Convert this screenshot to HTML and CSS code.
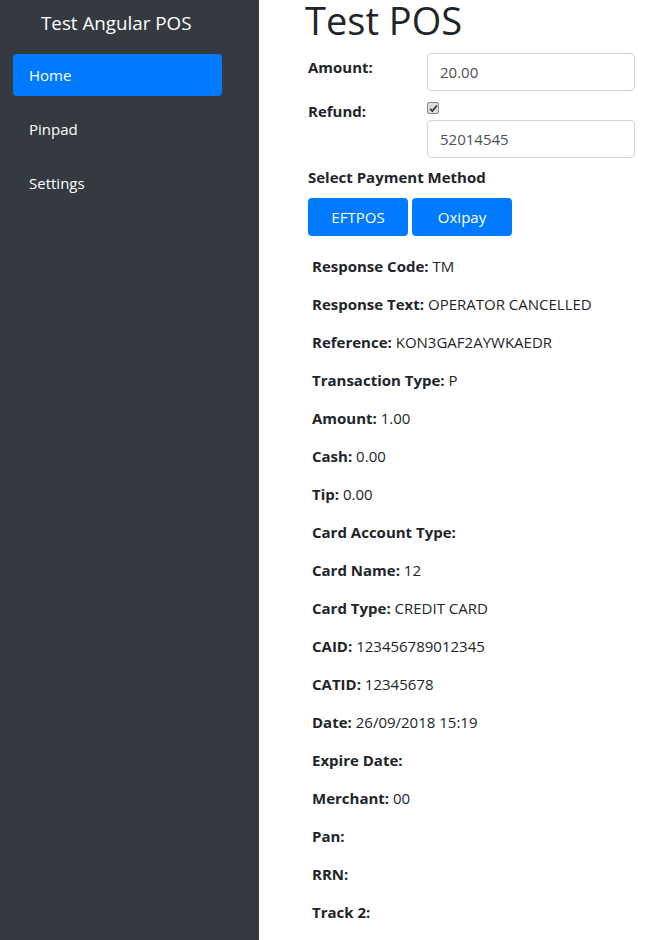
FILE: index.html
```html
<!DOCTYPE html>
<html lang="en">
<head>
<meta charset="utf-8">
<title>Test Angular POS</title>
<link rel="stylesheet" href="styles.css">
</head>
<body>
<div class="layout">
  <aside class="sidebar">
    <div class="brand">Test Angular POS</div>
    <nav class="nav">
      <a class="nav-link active" href="#">Home</a>
      <a class="nav-link" href="#">Pinpad</a>
      <a class="nav-link" href="#">Settings</a>
    </nav>
  </aside>
  <main class="main">
    <h1 class="title">Test POS</h1>
    <form class="form">
      <div class="form-row">
        <label class="form-label">Amount:</label>
        <div class="form-field">
          <input class="form-control" type="text" value="20.00">
        </div>
      </div>
      <div class="form-row">
        <label class="form-label form-label-top">Refund:</label>
        <div class="form-field">
          <span class="check" role="checkbox" aria-checked="true">
            <svg viewBox="0 0 12 12" width="9" height="9"><path d="M1.5 6.5 L4.5 9.5 L10.5 2" fill="none" stroke="#333" stroke-width="2.2"/></svg>
          </span>
          <input class="form-control" type="text" value="52014545">
        </div>
      </div>
    </form>
    <div class="section-title">Select Payment Method</div>
    <div class="buttons">
      <button class="btn" type="button">EFTPOS</button>
      <button class="btn" type="button">Oxipay</button>
    </div>
    <div class="results">
      <p><b>Response Code:</b> TM</p>
      <p><b>Response Text:</b> OPERATOR CANCELLED</p>
      <p><b>Reference:</b> KON3GAF2AYWKAEDR</p>
      <p><b>Transaction Type:</b> P</p>
      <p><b>Amount:</b> 1.00</p>
      <p><b>Cash:</b> 0.00</p>
      <p><b>Tip:</b> 0.00</p>
      <p><b>Card Account Type:</b></p>
      <p><b>Card Name:</b> 12</p>
      <p><b>Card Type:</b> CREDIT CARD</p>
      <p><b>CAID:</b> 123456789012345</p>
      <p><b>CATID:</b> 12345678</p>
      <p><b>Date:</b> 26/09/2018 15:19</p>
      <p><b>Expire Date:</b></p>
      <p><b>Merchant:</b> 00</p>
      <p><b>Pan:</b></p>
      <p><b>RRN:</b></p>
      <p><b>Track 2:</b></p>
    </div>
  </main>
</div>
</body>
</html>
```
FILE: styles.css
```css
* { box-sizing: border-box; }
html, body { height: 100%; }
body {
  margin: 0;
  font-family: "Open Sans", "Noto Sans", sans-serif;
  font-size: 15px;
  line-height: 24px;
  color: #212529;
  background: #fff;
  overflow: hidden;
}
.layout { display: flex; min-height: 940px; }
.sidebar {
  width: 259px;
  flex: 0 0 259px;
  background: #343a40;
  color: #fff;
}
.brand {
  padding: 8px 0 0 41px;
  font-size: 18.8px;
  line-height: 30px;
}
.nav {
  display: flex;
  flex-direction: column;
  gap: 12px;
  margin: 16px 0 0 13px;
  width: 209px;
}
.nav-link {
  display: block;
  height: 42px;
  line-height: 42px;
  padding: 0 16px;
  color: #fff;
  text-decoration: none;
  border-radius: 4px;
  font-size: 15px;
}
.nav-link.active { background: #007bff; }
.main {
  flex: 1;
  padding: 0 0 0 49px;
}
.title {
  margin: 0 0 0 -3px;
  font-size: 38px;
  font-weight: 500;
  line-height: 40px;
  color: #212529;
}
.form { margin-top: 13px; }
.form-row {
  display: flex;
  margin-bottom: 10px;
}
.form-label {
  width: 119px;
  flex: 0 0 119px;
  font-weight: 700;
  padding-top: 2px;
}
.form-label-top {
  padding-top: 0;
  margin-top: -2px;
}
.form-field {
  display: flex;
  flex-direction: column;
  align-items: flex-start;
}
.form-control {
  width: 208px;
  height: 38px;
  padding: 0 12px;
  border: 1px solid #ced4da;
  border-radius: 4px;
  font-family: inherit;
  font-size: 15px;
  color: #495057;
  background: #fff;
}
.check {
  display: flex;
  align-items: center;
  justify-content: center;
  width: 12px;
  height: 12px;
  margin: 1px 0 6px 0;
  border: 1px solid #8a8a8a;
  border-radius: 2px;
  background: #dcdcdc;
}
.section-title {
  font-weight: 700;
  line-height: 24px;
  margin-top: -3px;
}
.buttons {
  display: flex;
  gap: 4px;
  margin-top: 9px;
}
.btn {
  width: 100px;
  height: 38px;
  border: 0;
  border-radius: 4px;
  background: #007bff;
  color: #fff;
  font-family: inherit;
  font-size: 15px;
}
.results {
  margin-top: 18px;
  padding-left: 4px;
}
.results p {
  margin: 0 0 14px;
  line-height: 24px;
}
.results b { font-weight: 700; }
```
